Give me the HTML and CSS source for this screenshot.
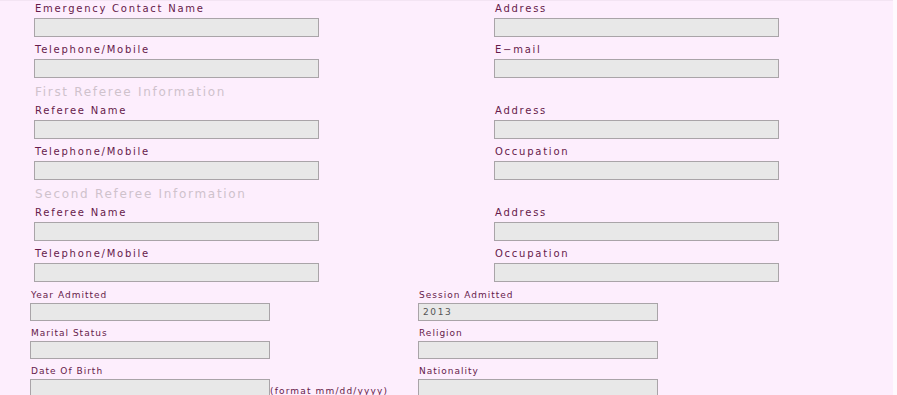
FILE: index.html
```html
<!DOCTYPE html>
<html>
<head>
<meta charset="utf-8">
<link rel="stylesheet" href="styles.css">
</head>
<body>
<div class="page">
  <div class="upper">
    <div class="field"><label>Emergency Contact Name</label><input class="big" type="text"></div>
    <div class="field"><label>Address</label><input class="big" type="text"></div>
    <div class="field"><label>Telephone/Mobile</label><input class="big" type="text"></div>
    <div class="field"><label>E−mail</label><input class="big" type="text"></div>
    <h3 class="heading">First Referee Information</h3>
    <div class="field"><label>Referee Name</label><input class="big" type="text"></div>
    <div class="field"><label>Address</label><input class="big" type="text"></div>
    <div class="field"><label>Telephone/Mobile</label><input class="big" type="text"></div>
    <div class="field"><label>Occupation</label><input class="big" type="text"></div>
    <h3 class="heading">Second Referee Information</h3>
    <div class="field"><label>Referee Name</label><input class="big" type="text"></div>
    <div class="field"><label>Address</label><input class="big" type="text"></div>
    <div class="field"><label>Telephone/Mobile</label><input class="big" type="text"></div>
    <div class="field"><label>Occupation</label><input class="big" type="text"></div>
  </div>
  <div class="lower">
    <div class="sfield"><label>Year Admitted</label><input class="small" type="text"></div>
    <div class="sfield"><label>Session Admitted</label><input class="small" type="text" value="2013"></div>
    <div class="sfield"><label>Marital Status</label><input class="small" type="text"></div>
    <div class="sfield"><label>Religion</label><input class="small" type="text"></div>
    <div class="sfield"><label>Date Of Birth</label><div class="inline"><input class="small" type="text"><span class="hint">(format mm/dd/yyyy)</span></div></div>
    <div class="sfield"><label>Nationality</label><input class="small" type="text"></div>
  </div>
</div>
</body>
</html>
```

FILE: styles.css
```css
html, body {
  margin: 0;
  padding: 0;
  background: #fefafe;
  height: 100%;
  overflow: hidden;
}
.page {
  width: 893px;
  min-height: 395px;
  background: #fdeefd;
  box-shadow: inset 0 1px 0 #f3e4f3;
  font-family: "DejaVu Sans", Verdana, sans-serif;
  color: #661a4a;
}
.upper {
  display: grid;
  grid-template-columns: 460px 399px;
  padding-left: 34px;
}
.field {
  display: flex;
  flex-direction: column;
  margin-bottom: 4px;
}
.field label {
  height: 18px;
  line-height: 18px;
  font-size: 10px;
  letter-spacing: 1.75px;
  padding-left: 1px;
}
.big {
  width: 285px;
  height: 19px;
  box-sizing: border-box;
  border: 1px solid #a9a4a8;
  background: #e8e8e8;
  margin: 0;
  padding: 0 6px;
}
.heading {
  grid-column: 1 / -1;
  margin: 0;
  height: 20px;
  line-height: 20px;
  font-size: 12px;
  font-weight: normal;
  color: #cfc2cc;
  letter-spacing: 1.7px;
  padding-left: 1px;
}
.lower {
  display: grid;
  grid-template-columns: 388px 400px;
  padding-left: 30px;
  padding-top: 1px;
}
.sfield {
  display: flex;
  flex-direction: column;
  margin-bottom: 4px;
}
.sfield label {
  height: 16px;
  line-height: 16px;
  font-size: 9px;
  letter-spacing: 1px;
  padding-left: 1px;
}
.small {
  width: 240px;
  height: 18px;
  box-sizing: border-box;
  border: 1px solid #a9a4a8;
  background: #e8e8e8;
  margin: 0;
  padding: 0 4px;
  font-family: "DejaVu Sans", Verdana, sans-serif;
  font-size: 9px;
  letter-spacing: 1.6px;
  color: #555;
}
.inline {
  display: flex;
  align-items: flex-end;
}
.hint {
  font-size: 9px;
  letter-spacing: 1.15px;
  line-height: 11px;
  margin-left: 0;
}
```
